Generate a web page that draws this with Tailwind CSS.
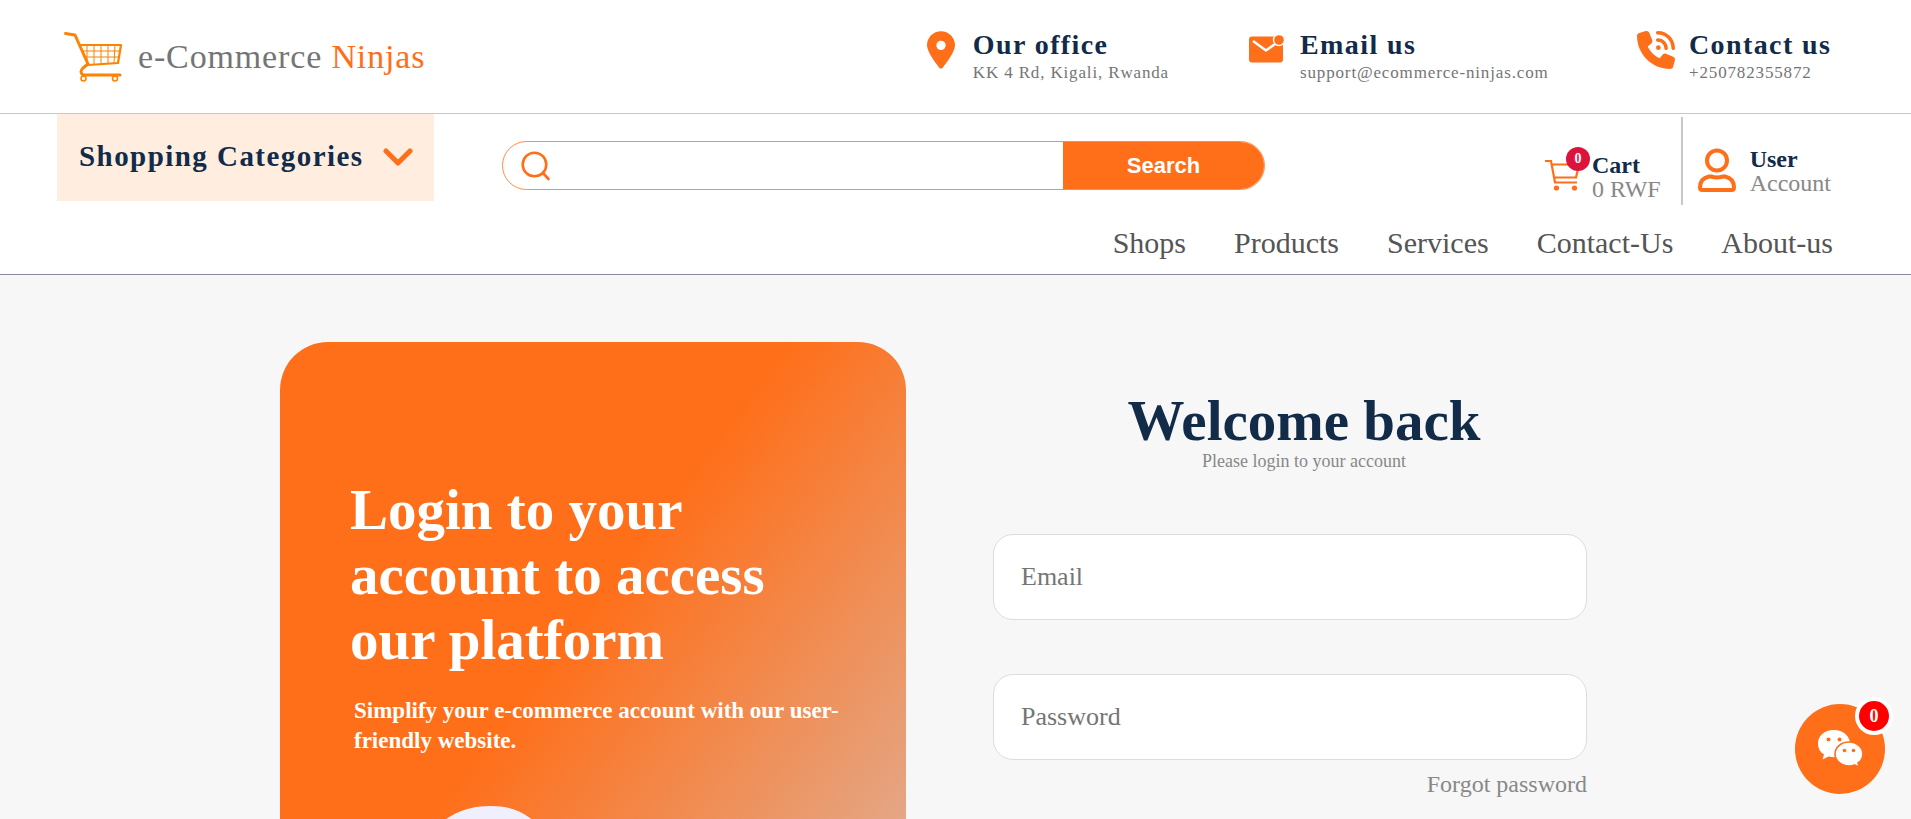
<!DOCTYPE html>
<html lang="en">
<head>
<meta charset="utf-8">
<meta name="viewport" content="width=device-width, initial-scale=1">
<title>e-Commerce Ninjas</title>
<script src="https://cdn.jsdelivr.net/npm/@tailwindcss/browser@4"></script>
</head>
<body class="bg-[#f7f7f7] font-['Liberation_Serif',serif] text-[#757575]">
<header class="border-b border-[#8a889f] bg-white">
  <div class="flex h-[114px] items-center justify-between border-b border-[#c8c8c8] pl-16 pr-[78px]">
    <a href="#" class="flex items-center gap-4 text-[34px] leading-none">
      <svg class="h-[50px] w-[58px]" viewBox="0 0 58 50" fill="none" stroke="#ff8200">
        <path d="M1.500 1.500 11 3l13 29-5 4q-4 4 0 7h37" stroke-width="3" stroke-linecap="round" stroke-linejoin="round"/>
        <path d="M16 13h41l-3 18-30 2" stroke-width="2.200" stroke-linejoin="round"/>
        <path d="M18.500 19h37M21 25h34M23 13v17M30 13v19M37 13v19M44 13v18M51 13l-1 18" stroke-width="1"/>
        <circle cx="19.500" cy="46.500" r="2.500" stroke-width="1.500"/><circle cx="51" cy="46.500" r="2.500" stroke-width="1.500"/>
      </svg>
      <span class="tracking-wide">e-Commerce <span class="text-[#ff6e18]">Ninjas</span></span>
    </a>
    <div class="flex gap-20">
      <div class="flex gap-[18px]">
        <svg class="mt-0.5 h-[38px] w-7" viewBox="0 0 384 512" fill="#ff6e18"><path d="M215.700 499.200C267 435 384 279.400 384 192 384 86 298 0 192 0S0 86 0 192c0 87.400 117 243 168.300 307.200 12.300 15.300 35.100 15.300 47.400 0zM192 128a64 64 0 1 1 0 128 64 64 0 1 1 0-128z"/></svg>
        <div class="min-w-[195px]"><h2 class="text-[28px] leading-8 font-bold tracking-wider text-[#122b49]">Our office</h2><p class="text-[17px] leading-6 tracking-wider">KK 4 Rd, Kigali, Rwanda</p></div>
      </div>
      <div class="flex gap-4">
        <svg class="mt-1.5 h-7 w-[35px]" viewBox="0 0 35 28"><rect y="1.500" width="34" height="26" rx="3" fill="#ff6e18"/><path d="m4 6 13 9.500L26 9" fill="none" stroke="#fff" stroke-width="2.500"/><circle cx="30" cy="5" r="6.200" fill="#fff"/><circle cx="30" cy="5" r="4.800" fill="#ff6e18"/></svg>
        <div class="min-w-[257px]"><h2 class="text-[28px] leading-8 font-bold tracking-wider text-[#122b49]">Email us</h2><p class="text-[17px] leading-6 tracking-wider">support@ecommerce-ninjas.com</p></div>
      </div>
      <div class="flex gap-3.5">
        <svg class="mt-0.5 size-[38px]" viewBox="0 0 512 512" fill="#ff6e18"><path d="M280 0C408.100 0 512 103.900 512 232c0 13.300-10.700 24-24 24s-24-10.700-24-24c0-101.600-82.400-184-184-184-13.300 0-24-10.700-24-24s10.700-24 24-24zm8 192a32 32 0 1 1 0 64 32 32 0 1 1 0-64zm-32-72c0-13.300 10.700-24 24-24 75.100 0 136 60.900 136 136 0 13.300-10.700 24-24 24s-24-10.700-24-24c0-48.600-39.400-88-88-88-13.300 0-24-10.700-24-24zM117.500 1.400c19.400-5.300 39.700 4.600 47.400 23.200l40 96c6.800 16.300 2.100 35.200-11.600 46.300L144 207.300c33.300 70.400 90.300 127.400 160.700 160.700L345 318.700c11.200-13.700 30-18.400 46.300-11.600l96 40c18.600 7.700 28.500 28 23.200 47.400l-24 88C481.800 499.900 466 512 448 512 200.600 512 0 311.400 0 64c0-18 12.100-33.800 29.500-38.600l88-24z"/></svg>
        <div class="min-w-[144px]"><h2 class="text-[28px] leading-8 font-bold tracking-wider text-[#122b49]">Contact us</h2><p class="text-[17px] leading-6 tracking-wider">+250782355872</p></div>
      </div>
    </div>
  </div>

  <div class="flex items-start pr-20 pl-[57px]">
    <button type="button" class="flex h-[87px] w-[377px] items-center justify-between bg-[#ffeee0] pr-[21px] pb-0.5 pl-[22px] text-[29px] font-bold tracking-wider text-[#122b49]">
      Shopping Categories
      <svg class="h-[18px] w-[30px]" viewBox="0 0 30 18" fill="none" stroke="#ff6e18" stroke-width="5" stroke-linecap="round" stroke-linejoin="round"><path d="m3 3 12 12L27 3"/></svg>
    </button>
    <form class="mt-[27px] ml-[68px] flex h-[49px] w-[763px] overflow-hidden rounded-full border border-[#ff8c48]">
      <label for="q" class="flex items-center pl-[18px]" aria-label="Search products">
        <svg class="size-[30px]" viewBox="0 0 30 30" fill="none" stroke="#ff6e18" stroke-width="2.600" stroke-linecap="round"><circle cx="13.500" cy="13.500" r="11.800"/><path d="m22 22 5.500 6"/></svg>
      </label>
      <input id="q" type="text" class="min-w-0 flex-1 px-3 text-xl outline-none">
      <button type="submit" class="w-[201px] bg-[#ff6e18] font-['Liberation_Sans',sans-serif] text-[22px] font-bold text-white">Search</button>
    </form>
    <div class="mt-[3px] ml-auto flex h-[88px]">
      <a href="#" class="flex border-r-2 border-[#c8c8c8] pt-9 pr-5 text-2xl">
        <span class="relative mt-[6px] mr-[13px] block">
          <svg class="h-8 w-[34px]" viewBox="0 0 34 32" fill="none" stroke="#ff6e18" stroke-width="2.200"><path d="M0 2h6l4 21.500h22M7.500 5.500H34L31 18.500H9.500"/><circle cx="11.500" cy="29" r="2.600" fill="#ff6e18" stroke="none"/><circle cx="29.500" cy="29" r="2.600" fill="#ff6e18" stroke="none"/></svg>
          <span class="absolute -top-3 left-[21px] flex size-6 items-center justify-center rounded-full bg-[#dc143c] text-sm font-bold text-white">0</span>
        </span>
        <span class="leading-6"><strong class="block text-[#122b49]">Cart</strong><span class="block text-[#888]">0 RWF</span></span>
      </a>
      <a href="#" class="flex pt-[30px] pl-[15px] text-2xl">
        <svg class="mt-px h-11 w-[38px]" viewBox="0 0 38 44" fill="none" stroke="#ff6e18" stroke-width="4"><circle cx="19" cy="12.500" r="10"/><path d="M11 28.500h2q6 2 12 0h2q9 2 9 11 0 2.500-2.500 2.500h-29Q2 42 2 39.500q0-9 9-11z"/></svg>
        <span class="ml-3.5 leading-6"><strong class="block text-[#122b49]">User</strong><span class="block text-[#888]">Account</span></span>
      </a>
    </div>
  </div>
  <nav class="flex h-[69px] items-center justify-end gap-12 pt-1.5 pr-[78px] text-3xl text-[#555]">
    <a href="#">Shops</a><a href="#">Products</a><a href="#">Services</a><a href="#">Contact-Us</a><a href="#">About-us</a>
  </nav>
</header>

<main class="grid grid-cols-[626fr_622fr] gap-[87px] pt-[67px] pr-[296px] pl-[280px]">
  <section class="flex min-h-[839px] flex-col overflow-hidden rounded-[48px] bg-[linear-gradient(127deg,#ff6e18_40%,#d5c6c2)] px-[70px] pt-[135px] text-white">
    <h2 class="max-w-[440px] text-[57px] leading-[65px] font-bold">Login to your account to access our platform</h2>
    <p class="mt-6 -mr-5 ml-1 text-[23px] leading-[30px] font-bold">Simplify your e-commerce account with our user-friendly website.</p>
    <svg class="mt-[50px] ml-[62px] w-[160px]" viewBox="0 0 160 200" fill="#f0effe"><path d="M0 74C4 44 25 0 78 0c30 0 40 12 60 28 24 22 24 70 8 110s-60 62-96 48S-4 120 0 74z"/></svg>
  </section>
  <section class="pt-[46px]">
    <h1 class="text-center text-[57px] leading-[65px] font-bold text-[#122b49]">Welcome back</h1>
    <p class="text-center text-lg leading-4 text-[#888]">Please login to your account</p>
    <form class="mr-7 mt-[65px] flex flex-col">
      <input type="email" aria-label="Email" placeholder="Email" class="h-[86px] rounded-[20px] border border-[#ddd] bg-white px-[27px] text-[26px] placeholder:text-[#757575]">
      <input type="password" aria-label="Password" placeholder="Password" class="mt-[54px] h-[86px] rounded-[20px] border border-[#ddd] bg-white px-[27px] text-[26px] placeholder:text-[#757575]">
      <a href="#" class="mt-2.5 self-end text-2xl leading-7 text-[#888]">Forgot password</a>
    </form>
  </section>
</main>

<button type="button" aria-label="Chat" class="fixed right-[26px] bottom-[25px] flex size-[90px] items-center justify-center rounded-full bg-[#ff6e18]">
  <svg class="h-[38px] w-[46px]" viewBox="0 0 46 38"><g fill="#fff"><path d="M17 0C7 0 1 6 1 13.500c0 5 2 8.500 6 11l-1.500 5 6-3q9 2 15-1.500Q33 21 33 13.500C33 6 26 0 17 0z"/><path d="M32 12c-8 0-14 5.500-14 12s6 12 14 12q3 0 5.500-1l5 2.500-1.500-4.500c3-2 5-5 5-9 0-6.500-6-12-14-12z" stroke="#ff6e18" stroke-width="1.600"/></g><g fill="#ff6e18"><circle cx="11.500" cy="9.500" r="2"/><circle cx="22.500" cy="9.500" r="2"/><circle cx="27.500" cy="20.500" r="1.800"/><circle cx="36.500" cy="20.500" r="1.800"/></g></svg>
  <span class="absolute -top-[7px] -right-2 flex size-[38px] items-center justify-center rounded-full border-4 border-white bg-[#f00] text-lg font-bold text-white">0</span>
</button>
</body>
</html>
